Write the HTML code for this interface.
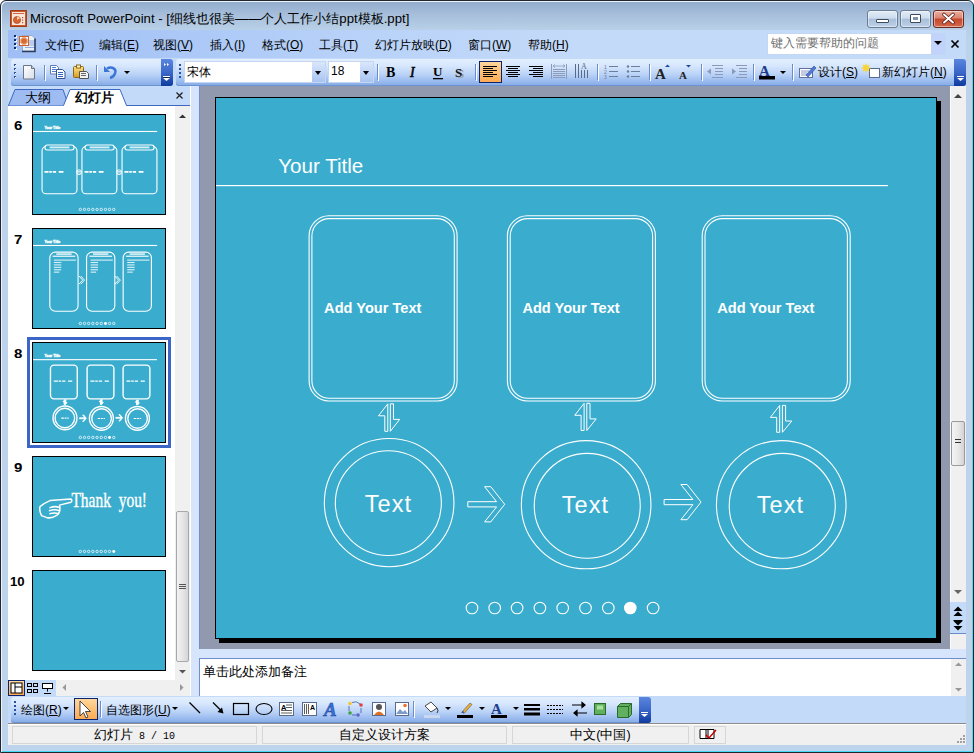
<!DOCTYPE html>
<html><head><meta charset="utf-8">
<style>
*{margin:0;padding:0;box-sizing:border-box}
html,body{width:974px;height:753px;overflow:hidden;background:#fff}
body{font-family:"Liberation Sans",sans-serif;font-size:12px;color:#000;position:relative}
.a{position:absolute}
#win{left:0;top:0;width:974px;height:753px;border:1px solid #1e2630;border-radius:6px 6px 0 0;background:linear-gradient(#94aecf 2px,#a7bfdb 14px,#b9d0e8 29px,#bcd3eb 40px,#bed4ec 100%);box-shadow:inset 1px 1px 0 #eef4fa,inset -1px -1px 0 #46d8f4}
#title{left:30px;top:10px;font-size:13.2px;color:#000;white-space:nowrap;letter-spacing:0}
.wbtn{top:10px;height:18px;border:1px solid #6b7d93;border-radius:3px;background:linear-gradient(#e2ecf6 0,#ccdcee 45%,#a8bfd9 50%,#bdd1e8 100%);box-shadow:inset 0 0 0 1px rgba(255,255,255,.45)}
#menubar{left:8px;top:30px;width:958px;height:28px;background:linear-gradient(90deg,#9ebef5 0,#b7d1f8 35%,#c4daf9 60%,#c4daf9 100%)}
.menu{top:37px;font-size:12px;white-space:nowrap}
.dock{background:#c4daf9}
.tb{height:27px;border-radius:3px;background:linear-gradient(#e3effe 0,#d7e7fd 25%,#bcd4f7 55%,#9dbdf0 80%,#84a9e4 100%);box-shadow:inset 0 -1px 0 #6a93d0}
.chev{width:12px;height:27px;border-radius:0 3px 3px 0;background:linear-gradient(#5a86de 0,#3b67c8 50%,#0f3a9e 100%)}
.grip{width:3px;height:15px;background:repeating-linear-gradient(#27519c 0 2px,transparent 2px 3px,transparent 3px 4px)}
.sep{width:1px;height:17px;background:#6a8ccb;box-shadow:1px 0 0 #fff}
.ttxt{font-size:12px;white-space:nowrap}
#ws{left:199px;top:86px;width:751px;height:563px;background:#9099ae;border-left:1px solid #6f8fca}
#slide{left:215px;top:97px;width:722px;height:542px;background:#3aadce;border:1px solid #000;box-shadow:4px 4px 0 #000}
.sb{background:#f0f0f0}
.stat{top:726px;height:18px;border:1px solid #d6d6d6;background:#f0f0f0;text-align:center;font-size:12.5px;line-height:16px;white-space:nowrap}
.num{font-weight:bold;font-size:12px}
.thumb{left:32px;width:134px;height:101px;border:1px solid #000;background:#3aadce;overflow:hidden}
</style></head><body>
<div id="win" class="a"></div>
<!-- title bar -->
<svg class="a" style="left:10px;top:10px" width="17" height="17" viewBox="0 0 17 17">
<rect x="0" y="0" width="17" height="17" fill="#c9582c"/>
<rect x="0.5" y="0.5" width="16" height="16" fill="none" stroke="#a23f18"/>
<rect x="2" y="2" width="13" height="13" fill="#f7e6dc"/>
<rect x="3" y="3" width="11" height="1" fill="#d0643a"/>
<circle cx="7" cy="10" r="3.6" fill="#d6652f" stroke="#a8421b" stroke-width=".6"/>
<path d="M7 10 V6.4 A3.6 3.6 0 0 1 10.2 8.2Z" fill="#f3c7a8"/>
<rect x="12" y="7" width="1.2" height="1.2" fill="#b24a22"/><rect x="12" y="9.5" width="1.2" height="1.2" fill="#b24a22"/><rect x="12" y="12" width="1.2" height="1.2" fill="#b24a22"/>
</svg>
<div id="title" class="a">Microsoft PowerPoint - [细线也很美——个人工作小结ppt模板.ppt]</div>
<div class="a wbtn" style="left:867px;width:31px"></div>
<div class="a" style="left:876px;top:19px;width:13px;height:4px;background:#fff;border:1px solid #3b4b5e;border-radius:1px"></div>
<div class="a wbtn" style="left:900px;width:31px"></div>
<div class="a" style="left:910px;top:14px;width:11px;height:9px;background:#fff;border:1px solid #3b4b5e;border-radius:1px"></div>
<div class="a" style="left:913px;top:17px;width:5px;height:3px;background:#7c93ad"></div>
<div class="a wbtn" style="left:933px;width:31px;border-color:#6a2a22;background:linear-gradient(#eab0a2 0,#dc8672 42%,#c7482c 52%,#d4694d 100%)"></div>
<svg class="a" style="left:933px;top:10px" width="31" height="18"><path d="M11 4.5 L20 12.5 M20 4.5 L11 12.5" stroke="#5a2018" stroke-width="3.6" stroke-linecap="round"/><path d="M11 4.5 L20 12.5 M20 4.5 L11 12.5" stroke="#fff" stroke-width="1.9" stroke-linecap="round"/></svg>

<div id="menubar" class="a"></div>
<svg class="a" style="left:0;top:28px" width="50" height="30" viewBox="0 28 50 30">
<g fill="#fff"><rect x="15" y="36" width="2" height="2"/><rect x="15" y="40" width="2" height="2"/><rect x="15" y="44" width="2" height="2"/><rect x="15" y="48" width="2" height="2"/></g>
<g fill="#0f2a66"><rect x="14" y="35" width="2" height="2"/><rect x="14" y="39" width="2" height="2"/><rect x="14" y="43" width="2" height="2"/><rect x="14" y="47" width="2" height="2"/></g>
<path d="M22.5 35.5h9.5l3 3v12.5h-12.5z" fill="#e8f0fc" stroke="#8aa0c0" stroke-width=".8"/>
<path d="M35 38.5v13h-13" fill="none" stroke="#2c3e5c" stroke-width="1.6"/>
<path d="M29 41h5M29 43h5M29 45h5M25 47.5h9" stroke="#7fa2dc" stroke-width=".9"/>
<rect x="19" y="36" width="10" height="10" fill="#d0602c"/>
<rect x="20" y="37" width="8" height="8" fill="#f2b48c"/>
<circle cx="24" cy="41" r="2.8" fill="#d56a34"/>
<g fill="#fff"><rect x="20" y="37" width="2" height="1"/><rect x="20" y="37" width="1" height="2"/><rect x="26" y="37" width="2" height="1"/><rect x="27" y="37" width="1" height="2"/><rect x="20" y="44" width="2" height="1"/><rect x="20" y="43" width="1" height="2"/><rect x="26" y="44" width="2" height="1"/><rect x="27" y="43" width="1" height="2"/></g>
</svg>
<div class="a menu" style="left:45px">文件(<u>F</u>)</div>
<div class="a menu" style="left:99px">编辑(<u>E</u>)</div>
<div class="a menu" style="left:153px">视图(<u>V</u>)</div>
<div class="a menu" style="left:210px">插入(<u>I</u>)</div>
<div class="a menu" style="left:262px">格式(<u>O</u>)</div>
<div class="a menu" style="left:319px">工具(<u>T</u>)</div>
<div class="a menu" style="left:375px">幻灯片放映(<u>D</u>)</div>
<div class="a menu" style="left:468px">窗口(<u>W</u>)</div>
<div class="a menu" style="left:528px">帮助(<u>H</u>)</div>
<!-- help box -->
<div class="a" style="left:767px;top:33px;width:179px;height:22px;background:#fff;border:1px solid #c3d6f3"></div>
<div class="a" style="left:931px;top:34px;width:14px;height:20px;background:#c1d3fb"></div>
<div class="a" style="left:934px;top:41px;width:0;height:0;border-left:4px solid transparent;border-right:4px solid transparent;border-top:4px solid #000"></div>
<div class="a" style="left:771px;top:35px;font-size:12px;color:#707070;white-space:nowrap">键入需要帮助的问题</div>
<svg class="a" style="left:950px;top:39px" width="10" height="10"><path d="M1.5 1.5L8.5 8.5M8.5 1.5L1.5 8.5" stroke="#000" stroke-width="1.7"/></svg>

<!-- toolbar dock -->
<div class="a dock" style="left:8px;top:58px;width:958px;height:28px"></div>
<div class="a tb" style="left:11px;top:59px;width:162px"></div>
<div class="a chev" style="left:161px;top:59px"></div>
<div class="a tb" style="left:176px;top:59px;width:790px"></div>
<div class="a chev" style="left:954px;top:59px"></div>


<!-- font boxes -->
<div class="a" style="left:184px;top:61px;width:142px;height:22px;background:#fff;border:1px solid #c5d6f2"></div>
<div class="a" style="left:312px;top:62px;width:13px;height:20px;background:linear-gradient(#d9e7fc,#a9c4f2)"></div>
<div class="a" style="left:315px;top:71px;width:0;height:0;border-left:3.5px solid transparent;border-right:3.5px solid transparent;border-top:4px solid #000"></div>
<div class="a ttxt" style="left:187px;top:64px">宋体</div>
<div class="a" style="left:328px;top:61px;width:46px;height:22px;background:#fff;border:1px solid #c5d6f2"></div>
<div class="a" style="left:360px;top:62px;width:13px;height:20px;background:linear-gradient(#d9e7fc,#a9c4f2)"></div>
<div class="a" style="left:363px;top:71px;width:0;height:0;border-left:3.5px solid transparent;border-right:3.5px solid transparent;border-top:4px solid #000"></div>
<div class="a ttxt" style="left:331px;top:64px">18</div>
<!-- align left pressed -->
<div class="a" style="left:479px;top:61px;width:23px;height:22px;background:linear-gradient(#ffd79b,#fdaa52);border:1px solid #0a2470"></div>
<div class="a ttxt" style="left:818px;top:64px">设计(<u>S</u>)</div>
<div class="a ttxt" style="left:882px;top:64px">新幻灯片(<u>N</u>)</div>

<!-- left pane -->
<div class="a" style="left:8px;top:86px;width:182px;height:20px;background:#c3daf9"></div>
<div class="a" style="left:8px;top:105px;width:182px;height:1px;background:#3d68c0"></div>
<div class="a" style="left:8px;top:106px;width:167px;height:574px;background:#fff"></div>
<div class="a sb" style="left:175px;top:106px;width:15px;height:574px"></div>
<div class="a" style="left:176px;top:511px;width:13px;height:151px;border:1px solid #a8a8a8;border-radius:2px;background:linear-gradient(90deg,#f2f2f2,#e6e6e6 50%,#d4d4d8)"></div>
<div class="a" style="left:179px;top:584px;width:7px;height:5px;background:repeating-linear-gradient(#555 0 1px,transparent 1px 2px)"></div>
<div class="a" style="left:8px;top:680px;width:48px;height:16px;background:#c3daf9"></div>
<div class="a sb" style="left:56px;top:680px;width:134px;height:16px"></div>
<div class="a" style="left:8px;top:680px;width:17px;height:16px;background:linear-gradient(#ffd99a,#fea94f);border:1px solid #0a2470"></div>
<!-- THUMBS -->
<div class="a num" style="left:14px;top:119px;transform:scaleX(1.25);transform-origin:0 0">6</div>
<div class="a thumb" style="top:114px"><svg width="133" height="100" viewBox="0 0 720 540" preserveAspectRatio="none"><text x="62" y="75" font-size="19" font-weight="bold" fill="#fff" stroke="#fff" stroke-width="2" font-family="Liberation Sans">Your Title</text><rect x="0" y="86" width="672" height="6" fill="#fff"/><rect x="49" y="171" width="189" height="254" rx="22" fill="none" stroke="#fff" stroke-width="6"/><rect x="65" y="162" width="157" height="27" rx="12" fill="#3aadce" stroke="#fff" stroke-width="6"/><rect x="90" y="170" width="107" height="10" fill="#fff" opacity=".8"/><path d="M62 307h115" stroke="#fff" stroke-width="9" stroke-dasharray="22 4 14 5 18 14 26 12"/><rect x="265" y="171" width="189" height="254" rx="22" fill="none" stroke="#fff" stroke-width="6"/><rect x="282" y="162" width="157" height="27" rx="12" fill="#3aadce" stroke="#fff" stroke-width="6"/><rect x="307" y="170" width="107" height="10" fill="#fff" opacity=".8"/><path d="M279 307h115" stroke="#fff" stroke-width="9" stroke-dasharray="22 4 14 5 18 14 26 12"/><rect x="482" y="171" width="189" height="254" rx="22" fill="none" stroke="#fff" stroke-width="6"/><rect x="498" y="162" width="157" height="27" rx="12" fill="#3aadce" stroke="#fff" stroke-width="6"/><rect x="523" y="170" width="107" height="10" fill="#fff" opacity=".8"/><path d="M495 307h115" stroke="#fff" stroke-width="9" stroke-dasharray="22 4 14 5 18 14 26 12"/><circle cx="249" cy="309" r="13" fill="none" stroke="#fff" stroke-width="5"/><path d="M239 305h20M239 313h20" stroke="#fff" stroke-width="4"/><circle cx="466" cy="309" r="13" fill="none" stroke="#fff" stroke-width="5"/><path d="M456 305h20M456 313h20" stroke="#fff" stroke-width="4"/><circle cx="256.0" cy="510" r="6.5" fill="none" stroke="#fff" stroke-width="4"/><circle cx="278.7" cy="510" r="6.5" fill="none" stroke="#fff" stroke-width="4"/><circle cx="301.1" cy="510" r="6.5" fill="none" stroke="#fff" stroke-width="4"/><circle cx="323.9" cy="510" r="6.5" fill="none" stroke="#fff" stroke-width="4"/><circle cx="346.7" cy="510" r="6.5" fill="none" stroke="#fff" stroke-width="4"/><circle cx="369.5" cy="510" r="6.5" fill="none" stroke="#fff" stroke-width="4"/><circle cx="392.3" cy="510" r="6.5" fill="none" stroke="#fff" stroke-width="4"/><circle cx="414.3" cy="510" r="6.5" fill="none" stroke="#fff" stroke-width="4"/><circle cx="437.1" cy="510" r="6.5" fill="none" stroke="#fff" stroke-width="4"/></svg></div>
<div class="a num" style="left:14px;top:233px;transform:scaleX(1.25);transform-origin:0 0">7</div>
<div class="a thumb" style="top:228px"><svg width="133" height="100" viewBox="0 0 720 540" preserveAspectRatio="none"><text x="62" y="75" font-size="19" font-weight="bold" fill="#fff" stroke="#fff" stroke-width="2" font-family="Liberation Sans">Your Title</text><rect x="0" y="86" width="672" height="6" fill="#fff"/><rect x="91" y="125" width="153" height="319" rx="30" fill="none" stroke="#fff" stroke-width="6"/><path d="M106 147h123" stroke="#fff" stroke-width="6"/><rect x="126" y="131" width="83" height="9" fill="#fff" opacity=".8"/><rect x="113" y="165" width="120" height="6" fill="#fff" opacity=".8"/><rect x="113" y="178" width="40" height="6" fill="#fff" opacity=".8"/><rect x="113" y="191" width="40" height="6" fill="#fff" opacity=".8"/><rect x="113" y="204" width="40" height="6" fill="#fff" opacity=".8"/><rect x="113" y="217" width="40" height="6" fill="#fff" opacity=".8"/><rect x="113" y="230" width="30" height="6" fill="#fff" opacity=".8"/><rect x="290" y="125" width="153" height="319" rx="30" fill="none" stroke="#fff" stroke-width="6"/><path d="M305 147h123" stroke="#fff" stroke-width="6"/><rect x="325" y="131" width="83" height="9" fill="#fff" opacity=".8"/><rect x="312" y="165" width="120" height="6" fill="#fff" opacity=".8"/><rect x="312" y="178" width="40" height="6" fill="#fff" opacity=".8"/><rect x="312" y="191" width="40" height="6" fill="#fff" opacity=".8"/><rect x="312" y="204" width="40" height="6" fill="#fff" opacity=".8"/><rect x="312" y="217" width="40" height="6" fill="#fff" opacity=".8"/><rect x="312" y="230" width="30" height="6" fill="#fff" opacity=".8"/><rect x="488" y="125" width="153" height="319" rx="30" fill="none" stroke="#fff" stroke-width="6"/><path d="M503 147h123" stroke="#fff" stroke-width="6"/><rect x="523" y="131" width="83" height="9" fill="#fff" opacity=".8"/><rect x="510" y="165" width="120" height="6" fill="#fff" opacity=".8"/><rect x="510" y="178" width="40" height="6" fill="#fff" opacity=".8"/><rect x="510" y="191" width="40" height="6" fill="#fff" opacity=".8"/><rect x="510" y="204" width="40" height="6" fill="#fff" opacity=".8"/><rect x="510" y="217" width="40" height="6" fill="#fff" opacity=".8"/><rect x="510" y="230" width="30" height="6" fill="#fff" opacity=".8"/><path d="M249 254 L269 276.09022556390977 L249 298 M259 254 L279 276.09022556390977 L259 298" fill="none" stroke="#fff" stroke-width="5"/><path d="M443 254 L463 276.09022556390977 L443 298 M453 254 L473 276.09022556390977 L453 298" fill="none" stroke="#fff" stroke-width="5"/><circle cx="256.0" cy="510" r="6.5" fill="none" stroke="#fff" stroke-width="4"/><circle cx="278.7" cy="510" r="6.5" fill="none" stroke="#fff" stroke-width="4"/><circle cx="301.1" cy="510" r="6.5" fill="none" stroke="#fff" stroke-width="4"/><circle cx="323.9" cy="510" r="6.5" fill="none" stroke="#fff" stroke-width="4"/><circle cx="346.7" cy="510" r="6.5" fill="none" stroke="#fff" stroke-width="4"/><circle cx="369.5" cy="510" r="6.5" fill="none" stroke="#fff" stroke-width="4"/><circle cx="392.3" cy="510" r="8" fill="#fff"/><circle cx="414.3" cy="510" r="6.5" fill="none" stroke="#fff" stroke-width="4"/><circle cx="437.1" cy="510" r="6.5" fill="none" stroke="#fff" stroke-width="4"/></svg></div>
<div class="a" style="left:27px;top:337px;width:144px;height:111px;border:3px solid #3b66c8"></div>
<div class="a num" style="left:14px;top:347px;transform:scaleX(1.25);transform-origin:0 0">8</div>
<div class="a thumb" style="top:342px"><svg width="133" height="100" viewBox="0 0 720 540" preserveAspectRatio="none"><text x="62.2" y="75.2" font-size="19" font-weight="bold" fill="#fff" stroke="#fff" stroke-width="2" font-family="Liberation Sans">Your Title</text>
<rect x="0" y="87" width="671" height="6" fill="#fff"/>
<rect x="94.6" y="119.3" width="145.0" height="182.2" rx="19" fill="none" stroke="#fff" stroke-width="7.5"/>
<path d="M112.6 206.0h100" stroke="#fff" stroke-width="6" stroke-dasharray="22 4 14 5 18 14 26 12"/>
<rect x="292.9" y="119.3" width="145.0" height="182.2" rx="19" fill="none" stroke="#fff" stroke-width="7.5"/>
<path d="M310.9 206.0h100" stroke="#fff" stroke-width="6" stroke-dasharray="22 4 14 5 18 14 26 12"/>
<rect x="487.7" y="119.3" width="145.0" height="182.2" rx="19" fill="none" stroke="#fff" stroke-width="7.5"/>
<path d="M505.7 206.0h100" stroke="#fff" stroke-width="6" stroke-dasharray="22 4 14 5 18 14 26 12"/>
<ellipse cx="173.15" cy="404.60" rx="64.8" ry="64.1" fill="none" stroke="#fff" stroke-width="7.5"/>
<ellipse cx="172.35" cy="405.10" rx="53" ry="52.4" fill="none" stroke="#fff" stroke-width="7.5"/>
<path d="M153.1 405.6h40" stroke="#fff" stroke-width="6" stroke-dasharray="14 4 10 4 12 8"/>
<path d="M168.8 333.3 V317.8 H162.5 L171.8 305.8 V333.3 Z" fill="#fff" stroke="#fff" stroke-width="5"/><path d="M174.3 305.8 H177.5 V321.4 H183.7 L174.3 333.3 Z" fill="#fff" stroke="#fff" stroke-width="5"/>
<ellipse cx="370.15" cy="406.70" rx="64.8" ry="64.1" fill="none" stroke="#fff" stroke-width="7.5"/>
<ellipse cx="371.25" cy="407.80" rx="53" ry="52.4" fill="none" stroke="#fff" stroke-width="7.5"/>
<path d="M350.1 407.7h40" stroke="#fff" stroke-width="6" stroke-dasharray="14 4 10 4 12 8"/>
<path d="M365.1 332.5 V317.3 H358.8 L368.1 305.3 V332.5 Z" fill="#fff" stroke="#fff" stroke-width="5"/><path d="M370.8 305.3 H374.0 V320.9 H380.2 L370.8 332.5 Z" fill="#fff" stroke="#fff" stroke-width="5"/>
<ellipse cx="565.25" cy="406.70" rx="64.8" ry="64.1" fill="none" stroke="#fff" stroke-width="7.5"/>
<ellipse cx="566.25" cy="407.80" rx="53" ry="52.4" fill="none" stroke="#fff" stroke-width="7.5"/>
<path d="M545.2 407.7h40" stroke="#fff" stroke-width="6" stroke-dasharray="14 4 10 4 12 8"/>
<path d="M560.7 334.3 V319.4 H554.4 L563.7 307.4 V334.3 Z" fill="#fff" stroke="#fff" stroke-width="5"/><path d="M566.4 307.4 H569.6 V323.0 H575.8 L566.4 334.3 Z" fill="#fff" stroke="#fff" stroke-width="5"/>
<path d="M251.80 403.70 H280.60 L268.60 388.70 H274.80 L288.70 406.30 L274.80 423.90 H268.60 L280.60 408.90 H251.80 Z" fill="#fff" stroke="#fff" stroke-width="4"/>
<path d="M448.10 401.50 H476.90 L464.90 386.50 H471.10 L485.00 404.10 L471.10 421.70 H464.90 L476.90 406.70 H448.10 Z" fill="#fff" stroke="#fff" stroke-width="4"/>
<circle cx="256.0" cy="510" r="6.5" fill="none" stroke="#fff" stroke-width="4"/><circle cx="278.7" cy="510" r="6.5" fill="none" stroke="#fff" stroke-width="4"/><circle cx="301.1" cy="510" r="6.5" fill="none" stroke="#fff" stroke-width="4"/><circle cx="323.9" cy="510" r="6.5" fill="none" stroke="#fff" stroke-width="4"/><circle cx="346.7" cy="510" r="6.5" fill="none" stroke="#fff" stroke-width="4"/><circle cx="369.5" cy="510" r="6.5" fill="none" stroke="#fff" stroke-width="4"/><circle cx="392.3" cy="510" r="6.5" fill="none" stroke="#fff" stroke-width="4"/><circle cx="414.3" cy="510" r="8" fill="#fff"/><circle cx="437.1" cy="510" r="6.5" fill="none" stroke="#fff" stroke-width="4"/></svg></div>
<div class="a num" style="left:14px;top:461px;transform:scaleX(1.25);transform-origin:0 0">9</div>
<div class="a thumb" style="top:456px"><svg width="133" height="100" viewBox="0 0 720 540" preserveAspectRatio="none"><text x="0" y="0" font-size="118" fill="#fff" font-family="Liberation Serif" stroke="#fff" stroke-width="2" transform="translate(208 268) scale(0.71 1)">Thank&#160;&#160;you!</text><g transform="scale(5.4135) translate(-33 -457)" fill="none" stroke="#fff" stroke-width="1.5" stroke-linejoin="round" stroke-linecap="round"><path d="M50 500.5 L71 499 Q72.6 500.6 71 502.2 L59.5 505 Q61 512 57 515 Q52 518.5 47 517.5 L41.5 515.5 Q39 510.5 40 506.5 Q45 502.5 50 500.5 Z"/><path d="M50 507.5 Q55 505.5 59.5 507.5 M49.5 510.5 Q54.5 508.8 59.5 510.5 M50 513.5 Q54.5 512 58.5 513.5"/></g><circle cx="256.0" cy="510" r="6.5" fill="none" stroke="#fff" stroke-width="4"/><circle cx="278.7" cy="510" r="6.5" fill="none" stroke="#fff" stroke-width="4"/><circle cx="301.1" cy="510" r="6.5" fill="none" stroke="#fff" stroke-width="4"/><circle cx="323.9" cy="510" r="6.5" fill="none" stroke="#fff" stroke-width="4"/><circle cx="346.7" cy="510" r="6.5" fill="none" stroke="#fff" stroke-width="4"/><circle cx="369.5" cy="510" r="6.5" fill="none" stroke="#fff" stroke-width="4"/><circle cx="392.3" cy="510" r="6.5" fill="none" stroke="#fff" stroke-width="4"/><circle cx="414.3" cy="510" r="6.5" fill="none" stroke="#fff" stroke-width="4"/><circle cx="437.1" cy="510" r="8" fill="#fff"/></svg></div>
<div class="a num" style="left:10px;top:575px;transform:scaleX(1.1);transform-origin:0 0">10</div>
<div class="a thumb" style="top:570px"></div>
<!-- /THUMBS -->
<!-- splitter -->
<div class="a" style="left:190px;top:86px;width:9px;height:610px;background:#d6e5fb;border-left:1px solid #fff"></div>

<div id="ws" class="a"></div>
<div id="slide" class="a"></div>
<!-- SLIDE8 --><svg class="a" style="left:216px;top:98px" width="720" height="540" viewBox="0 0 720 540"><text x="62.2" y="75.2" font-size="20.6" fill="#fff" font-family="Liberation Sans">Your Title</text>
<rect x="0" y="87" width="672" height="1.2" fill="#fff"/>
<rect x="93.1" y="117.8" width="148.0" height="185.2" rx="20" fill="none" stroke="#fff" stroke-width="1.1"/>
<rect x="95.9" y="120.6" width="142.4" height="179.6" rx="17.5" fill="none" stroke="#fff" stroke-width="1.1"/>
<text x="108.1" y="215.2" font-size="14.6" font-weight="bold" fill="#fff" font-family="Liberation Sans">Add Your Text</text>
<rect x="291.4" y="117.8" width="148.0" height="185.2" rx="20" fill="none" stroke="#fff" stroke-width="1.1"/>
<rect x="294.2" y="120.6" width="142.4" height="179.6" rx="17.5" fill="none" stroke="#fff" stroke-width="1.1"/>
<text x="306.4" y="215.2" font-size="14.6" font-weight="bold" fill="#fff" font-family="Liberation Sans">Add Your Text</text>
<rect x="486.2" y="117.8" width="148.0" height="185.2" rx="20" fill="none" stroke="#fff" stroke-width="1.1"/>
<rect x="489.0" y="120.6" width="142.4" height="179.6" rx="17.5" fill="none" stroke="#fff" stroke-width="1.1"/>
<text x="501.2" y="215.2" font-size="14.6" font-weight="bold" fill="#fff" font-family="Liberation Sans">Add Your Text</text>
<ellipse cx="173.15" cy="404.60" rx="64.8" ry="64.1" fill="none" stroke="#fff" stroke-width="1.1"/>
<ellipse cx="172.35" cy="405.10" rx="53" ry="52.4" fill="none" stroke="#fff" stroke-width="1.1"/>
<text x="172.4" y="413.8" font-size="23.5" letter-spacing="1.1" fill="#fff" text-anchor="middle" font-family="Liberation Sans">Text</text>
<path d="M168.8 333.3 V317.8 H162.5 L171.8 305.8 V333.3 Z" fill="none" stroke="#fff" stroke-width="1"/>
<path d="M174.3 305.8 H177.5 V321.4 H183.7 L174.3 333.3 Z" fill="none" stroke="#fff" stroke-width="1"/>
<ellipse cx="370.15" cy="406.70" rx="64.8" ry="64.1" fill="none" stroke="#fff" stroke-width="1.1"/>
<ellipse cx="371.25" cy="407.80" rx="53" ry="52.4" fill="none" stroke="#fff" stroke-width="1.1"/>
<text x="369.4" y="415.3" font-size="23.5" letter-spacing="1.1" fill="#fff" text-anchor="middle" font-family="Liberation Sans">Text</text>
<path d="M365.1 332.5 V317.3 H358.8 L368.1 305.3 V332.5 Z" fill="none" stroke="#fff" stroke-width="1"/>
<path d="M370.8 305.3 H374.0 V320.9 H380.2 L370.8 332.5 Z" fill="none" stroke="#fff" stroke-width="1"/>
<ellipse cx="565.25" cy="406.70" rx="64.8" ry="64.1" fill="none" stroke="#fff" stroke-width="1.1"/>
<ellipse cx="566.25" cy="407.80" rx="53" ry="52.4" fill="none" stroke="#fff" stroke-width="1.1"/>
<text x="564.5" y="415.3" font-size="23.5" letter-spacing="1.1" fill="#fff" text-anchor="middle" font-family="Liberation Sans">Text</text>
<path d="M560.7 334.3 V319.4 H554.4 L563.7 307.4 V334.3 Z" fill="none" stroke="#fff" stroke-width="1"/>
<path d="M566.4 307.4 H569.6 V323.0 H575.8 L566.4 334.3 Z" fill="none" stroke="#fff" stroke-width="1"/>
<path d="M251.80 403.70 H280.60 L268.60 388.70 H274.80 L288.70 406.30 L274.80 423.90 H268.60 L280.60 408.90 H251.80 Z" fill="none" stroke="#fff" stroke-width="1"/>
<path d="M448.10 401.50 H476.90 L464.90 386.50 H471.10 L485.00 404.10 L471.10 421.70 H464.90 L476.90 406.70 H448.10 Z" fill="none" stroke="#fff" stroke-width="1"/>
<circle cx="256.0" cy="510" r="5.8" fill="none" stroke="#fff" stroke-width="1.1"/><circle cx="278.7" cy="510" r="5.8" fill="none" stroke="#fff" stroke-width="1.1"/><circle cx="301.1" cy="510" r="5.8" fill="none" stroke="#fff" stroke-width="1.1"/><circle cx="323.9" cy="510" r="5.8" fill="none" stroke="#fff" stroke-width="1.1"/><circle cx="346.7" cy="510" r="5.8" fill="none" stroke="#fff" stroke-width="1.1"/><circle cx="369.5" cy="510" r="5.8" fill="none" stroke="#fff" stroke-width="1.1"/><circle cx="392.3" cy="510" r="5.8" fill="none" stroke="#fff" stroke-width="1.1"/><circle cx="414.3" cy="510" r="6.3" fill="#fff"/><circle cx="437.1" cy="510" r="5.8" fill="none" stroke="#fff" stroke-width="1.1"/></svg><!-- /SLIDE8 -->
<!-- right scrollbar -->
<div class="a sb" style="left:950px;top:86px;width:16px;height:563px;border-left:1px solid #fbfbfb"></div>
<div class="a" style="left:951px;top:421px;width:14px;height:45px;border:1px solid #9a9a9a;border-radius:2px;background:linear-gradient(90deg,#f4f4f4,#e9e9e9 50%,#d3d3d7)"></div>
<div class="a" style="left:955px;top:439px;width:6px;height:6px;background:repeating-linear-gradient(#333 0 1px,transparent 1px 3px)"></div>
<div class="a" style="left:950px;top:602px;width:16px;height:32px;background:#c3daf9;border-bottom:1px solid #6a8ccb"></div>
<!-- notes splitter + notes -->
<div class="a" style="left:199px;top:649px;width:767px;height:10px;background:#d6e5fb;border-bottom:1px solid #6f8fca"></div>
<div class="a" style="left:199px;top:659px;width:767px;height:37px;background:#fff;border-left:1px solid #6f8fca"></div>
<div class="a sb" style="left:951px;top:659px;width:15px;height:37px"></div>
<div class="a" style="left:203px;top:664px;font-size:12.7px;white-space:nowrap">单击此处添加备注</div>
<!-- drawing toolbar -->
<div class="a dock" style="left:8px;top:696px;width:958px;height:28px"></div>
<div class="a tb" style="left:11px;top:697px;width:640px;height:26px"></div>
<div class="a chev" style="left:639px;top:697px;height:26px"></div>
<div class="a" style="left:74px;top:698px;width:24px;height:22px;background:linear-gradient(#ffd79b,#fdaa52);border:1px solid #0a2470"></div>
<div class="a ttxt" style="left:21px;top:702px">绘图(<u>R</u>)</div>
<div class="a ttxt" style="left:106px;top:702px">自选图形(<u>U</u>)</div>
<!-- status bar -->
<div class="a" style="left:8px;top:723px;width:958px;height:22px;background:#f0f0f0;border-top:1px solid #8c8c8c;box-shadow:inset 0 1px 0 #fff"></div>
<div class="a stat" style="left:12px;width:245px">幻灯片<span style="font-family:'Liberation Mono',monospace;font-size:10px;white-space:pre"> 8 / 10</span></div>
<div class="a stat" style="left:262px;width:245px">自定义设计方案</div>
<div class="a stat" style="left:512px;width:177px">中文(中国)</div>
<div class="a stat" style="left:694px;width:32px"></div>
<!-- CHROME2 -->
<svg class="a" style="left:0;top:0" width="974" height="753" viewBox="0 0 974 753">
<defs>
<linearGradient id="gor" x1="0" y1="0" x2="0" y2="1"><stop offset="0" stop-color="#ffd99c"/><stop offset="1" stop-color="#fda54c"/></linearGradient>
</defs>
<!-- pane tabs -->
<path d="M8.5 105.5 L15 89.5 H63 L68.5 105.5" fill="#9ebcf2" stroke="#3d68c0"/>
<path d="M63.5 105.5 L70 89.5 H120 L126.5 105.5" fill="#fff" stroke="#3d68c0"/>
<rect x="64" y="105" width="62" height="1.2" fill="#fff"/>
<text x="25" y="102" font-size="12.5" font-family="Liberation Sans">大纲</text>
<text x="75" y="102" font-size="12.5" font-weight="bold" font-family="Liberation Sans">幻灯片</text>
<path d="M176.5 92.5 L182.5 98.5 M182.5 92.5 L176.5 98.5" stroke="#222" stroke-width="1.3"/>
<!-- left pane scrollbar arrows -->
<path d="M179 118 h7 l-3.5 -3.5z" fill="#333"/>
<path d="M179 670 h7 l-3.5 3.5z" fill="#555"/>
<path d="M66 684 v7 l-3.5 -3.5z" fill="#999"/>
<path d="M180 684 v7 l3.5 -3.5z" fill="#999"/>
<!-- view buttons -->
<rect x="11" y="683" width="11" height="10" fill="#fff" stroke="#000"/><path d="M15 683v10M15 687h7" stroke="#000"/>
<g fill="none" stroke="#000"><rect x="27.5" y="683.5" width="4" height="3"/><rect x="33.5" y="683.5" width="4" height="3"/><rect x="27.5" y="689.5" width="4" height="3"/><rect x="33.5" y="689.5" width="4" height="3"/>
<rect x="42.5" y="683.5" width="10" height="5" fill="#fff"/><path d="M47.5 688.5v3M44 693.5h7"/></g>
<!-- right scrollbar arrows -->
<path d="M954 98 h8 l-4 -4z" fill="#444"/>
<path d="M954 590 h8 l-4 4z" fill="#666"/>
<g fill="#000"><path d="M953.5 611 h9 l-4.5 -4.5z"/><path d="M953.5 616 h9 l-4.5 -4.5z"/><rect x="953.5" y="620" width="9" height="1"/><path d="M953.5 621 h9 l-4.5 4.5z"/><path d="M953.5 626 h9 l-4.5 4.5z"/></g>
<path d="M955 666 h7 l-3.5 -3.5z" fill="#999"/>
<path d="M955 688 h7 l-3.5 3.5z" fill="#999"/>
<!-- resize grip -->
<g fill="#a0a0a0"><rect x="963" y="741" width="2" height="2"/><rect x="960" y="741" width="2" height="2"/><rect x="957" y="741" width="2" height="2"/><rect x="963" y="738" width="2" height="2"/><rect x="960" y="738" width="2" height="2"/><rect x="963" y="735" width="2" height="2"/></g>
<!-- spell icon in status -->
<path d="M700 729.5h8v9h-8zM706 729.5h8v9h-8z" fill="#fff" stroke="#000"/>
<path d="M706 735 l3 3 l7 -8" stroke="#c00" stroke-width="1.5" fill="none"/>
</svg>
<!-- /CHROME2 -->
<!-- TB2 -->
<svg class="a" style="left:0;top:0" width="974" height="100" viewBox="0 0 974 100">
<g fill="#6a8ccb"><rect x="377" y="64" width="1" height="16"/><rect x="475" y="64" width="1" height="16"/><rect x="597" y="64" width="1" height="16"/><rect x="649" y="64" width="1" height="16"/><rect x="701" y="64" width="1" height="16"/><rect x="753" y="64" width="1" height="16"/><rect x="792" y="64" width="1" height="16"/></g>
<g fill="#fff"><rect x="378" y="65" width="1" height="16"/><rect x="476" y="65" width="1" height="16"/><rect x="598" y="65" width="1" height="16"/><rect x="650" y="65" width="1" height="16"/><rect x="702" y="65" width="1" height="16"/><rect x="754" y="65" width="1" height="16"/><rect x="793" y="65" width="1" height="16"/></g>
<!-- B I U S -->
<text x="386" y="77" font-size="14" font-weight="bold" font-family="Liberation Serif">B</text>
<text x="410" y="77" font-size="14" font-style="italic" font-family="Liberation Serif" stroke="#000" stroke-width=".5">I</text>
<text x="433" y="76" font-size="13" font-weight="bold" font-family="Liberation Serif">U</text><rect x="433" y="78" width="10" height="1.3" fill="#000"/>
<text x="457" y="78" font-size="13" font-weight="bold" font-family="Liberation Serif" fill="#999">S</text><text x="455" y="77" font-size="13" font-weight="bold" font-family="Liberation Serif" fill="#111">S</text>
<!-- align -->
<g fill="#000">
<rect x="483" y="66" width="14" height="1"/><rect x="483" y="68" width="10" height="1"/><rect x="483" y="70" width="14" height="1"/><rect x="483" y="72" width="10" height="1"/><rect x="483" y="74" width="14" height="1"/><rect x="483" y="76" width="10" height="1"/>
<rect x="506" y="66" width="14" height="1"/><rect x="508" y="68" width="10" height="1"/><rect x="506" y="70" width="14" height="1"/><rect x="508" y="72" width="10" height="1"/><rect x="506" y="74" width="14" height="1"/><rect x="508" y="76" width="10" height="1"/>
<rect x="529" y="66" width="14" height="1"/><rect x="533" y="68" width="10" height="1"/><rect x="529" y="70" width="14" height="1"/><rect x="533" y="72" width="10" height="1"/><rect x="529" y="74" width="14" height="1"/><rect x="533" y="76" width="10" height="1"/>
</g>
<g fill="#8c9cb8"><rect x="551" y="64" width="1" height="15"/><rect x="566" y="64" width="1" height="15"/><rect x="553" y="69" width="12" height="1"/><rect x="553" y="71" width="12" height="1"/><rect x="553" y="73" width="12" height="1"/><rect x="553" y="75" width="12" height="1"/><rect x="553" y="77" width="12" height="1"/><path d="M553 66h12M553 66l2 -1.5M553 66l2 1.5M565 66l-2 -1.5M565 66l-2 1.5" stroke="#8c9cb8" stroke-width=".8"/></g>
<g stroke="#5a6a8a" stroke-width="1"><path d="M575.5 64v14M578.5 64v14M581.5 70v8M584.5 70v8M587.5 70v8"/></g>
<text x="581" y="69" font-size="8" fill="#5a6a8a" font-family="Liberation Serif">A</text>
<!-- lists -->
<g fill="#6d7e9c"><text x="604" y="69" font-size="5" font-family="Liberation Sans">1</text><text x="604" y="74" font-size="5" font-family="Liberation Sans">2</text><text x="604" y="79" font-size="5" font-family="Liberation Sans">3</text>
<rect x="609" y="66" width="9" height="1"/><rect x="609" y="71" width="9" height="1"/><rect x="609" y="76" width="9" height="1"/>
<circle cx="628" cy="66.5" r="1.2"/><circle cx="628" cy="71.5" r="1.2"/><circle cx="628" cy="76.5" r="1.2"/><rect x="631" y="66" width="9" height="1"/><rect x="631" y="71" width="9" height="1"/><rect x="631" y="76" width="9" height="1"/></g>
<!-- A+ A- -->
<text x="655" y="79" font-size="15" font-weight="bold" font-family="Liberation Serif" fill="#222">A</text><path d="M665 67h5l-2.5 -2.5z" fill="#1c4aa8"/>
<text x="679" y="79" font-size="11" font-weight="bold" font-family="Liberation Serif" fill="#222">A</text><path d="M686 65h5l-2.5 2.5z" fill="#1c4aa8"/>
<!-- indents -->
<g fill="#8a9ab8"><rect x="712" y="65" width="11" height="1"/><rect x="715" y="68" width="8" height="1"/><rect x="715" y="71" width="8" height="1"/><rect x="715" y="74" width="8" height="1"/><rect x="712" y="77" width="11" height="1"/><path d="M707 71.5l4 -3v6z"/>
<rect x="736" y="65" width="11" height="1"/><rect x="739" y="68" width="8" height="1"/><rect x="739" y="71" width="8" height="1"/><rect x="739" y="74" width="8" height="1"/><rect x="736" y="77" width="11" height="1"/><path d="M736 71.5l-4 -3v6z"/></g>
<!-- font color -->
<text x="759" y="76" font-size="15" font-weight="bold" font-family="Liberation Serif" fill="#1c3c8c">A</text>
<rect x="759" y="76" width="16" height="3.5" fill="#000"/>
<path d="M780 71h6l-3 3z" fill="#000"/>
<!-- design icon -->
<rect x="799.5" y="68.5" width="13" height="9" fill="#fff" stroke="#6071a0"/><path d="M801 71h8M801 73h6M801 75h8" stroke="#8798c8"/>
<path d="M806 75 L814 66 L816 68 L808 77z" fill="#4e7ad8" stroke="#2a4a90" stroke-width=".6"/>
<!-- new slide icon -->
<rect x="869.5" y="68.5" width="10" height="9" fill="#fff" stroke="#5a6a8a"/>
<path d="M866 63l1 2.5l2.5-1l-1 2.5l2.5 1l-2.5 1l1 2.5l-2.5-1l-1 2.5l-1-2.5l-2.5 1l1-2.5l-2.5-1l2.5-1l-1-2.5l2.5 1z" fill="#f7d43a"/>
</svg>
<!-- /TB2 -->
<!-- DRAW -->
<svg class="a" style="left:0;top:690px" width="974" height="40" viewBox="0 690 974 40">
<g fill="#27519c"><rect x="14" y="701" width="2" height="2"/><rect x="14" y="705" width="2" height="2"/><rect x="14" y="709" width="2" height="2"/><rect x="14" y="713" width="2" height="2"/></g>
<path d="M63 707h6l-3 3z" fill="#000"/>
<path d="M172 707h6l-3 3z" fill="#000"/>
<path d="M80 701 v15 l3.5 -3.5 l2.5 5.5 l2 -1 l-2.5 -5.5 h5 z" fill="#fff" stroke="#333" stroke-width=".9"/>
<g fill="#6a8ccb"><rect x="100" y="701" width="1" height="16"/><rect x="413" y="701" width="1" height="16"/></g>
<g fill="#fff"><rect x="101" y="702" width="1" height="16"/><rect x="414" y="702" width="1" height="16"/></g>
<path d="M189.5 702.5 L200 713" stroke="#000" stroke-width="1.2"/>
<path d="M213 702.5 L221 710.5" stroke="#000" stroke-width="1.2"/><path d="M223.5 713.5 l-6 -1.5 l4.5 -4.5z" fill="#000"/>
<rect x="233.5" y="703.5" width="15" height="11" fill="none" stroke="#000" stroke-width="1.2"/>
<ellipse cx="264" cy="709" rx="8" ry="5.5" fill="none" stroke="#000" stroke-width="1.1"/>
<rect x="279.5" y="702.5" width="14" height="13" fill="#fff" stroke="#5a6a8a"/><text x="281" y="710" font-size="7.5" font-weight="bold" font-family="Liberation Sans">A</text><path d="M286 705h6M286 707.5h6M281 710.5h11M281 713h11" stroke="#333" stroke-width=".8"/>
<rect x="302.5" y="702.5" width="14" height="13" fill="#fff" stroke="#5a6a8a"/><path d="M304.5 704v10M306.5 704v10M308.5 704v10" stroke="#333" stroke-width=".8"/><text x="310" y="710" font-size="7" font-weight="bold" font-family="Liberation Sans">A</text>
<text x="324" y="716" font-size="19" font-weight="bold" font-style="italic" font-family="Liberation Serif" fill="#3a72d8" stroke="#1b3f9a" stroke-width=".5">A</text>
<g><circle cx="350" cy="703.5" r="1.8" fill="#f4c430"/><circle cx="361" cy="705" r="1.8" fill="#e04040"/><circle cx="350" cy="713" r="1.8" fill="#40a040"/><circle cx="358" cy="715" r="1.8" fill="#6060d0"/><path d="M352 702.5 A7 7 0 0 1 360 704M349 706 v5M352 715 h4M361 708 v5" stroke="#3a5aa0" stroke-width=".8" fill="none"/></g>
<rect x="372.5" y="702.5" width="13" height="13" fill="#fff" stroke="#5a6a8a"/><circle cx="379" cy="707" r="3" fill="#555"/><path d="M374 715 q5 -7 10 0z" fill="#e07020"/>
<rect x="395.5" y="702.5" width="13" height="13" fill="#fff" stroke="#5a6a8a"/><path d="M396 714 l4 -5 l3 3 l2 -2 l3 4z" fill="#7a9acb"/><circle cx="405" cy="705.5" r="1.8" fill="#f07030"/>
<path d="M425 706 l6 -4 l6 6 l-6 4z" fill="#fff" stroke="#333" stroke-width=".9"/><path d="M437 708 q2 3 0 5" stroke="#333" fill="none"/><rect x="424" y="715" width="16" height="3" fill="#c8d8f0"/>
<path d="M445 707h6l-3 3z" fill="#000"/>
<path d="M462 712 l8 -9 l2 1.5 l-8 9z" fill="#f0b030" stroke="#555" stroke-width=".6"/><path d="M461 713 l2 -2 l1.5 1.5z" fill="#2244aa"/><rect x="457" y="715" width="16" height="3" fill="#000"/>
<path d="M479 707h6l-3 3z" fill="#000"/>
<text x="491" y="714" font-size="15" font-weight="bold" font-family="Liberation Serif" fill="#1c3c8c">A</text><rect x="491" y="715" width="16" height="3" fill="#000"/>
<path d="M513 707h6l-3 3z" fill="#000"/>
<rect x="524" y="704" width="16" height="2" fill="#000"/><rect x="524" y="708" width="16" height="2.5" fill="#000"/><rect x="524" y="712.5" width="16" height="3" fill="#000"/>
<path d="M547 705.5h16M547 709.5h16M547 713.5h16" stroke="#000" stroke-width="1" stroke-dasharray="2 1"/>
<path d="M572 705h13M585 705l-3 -2.5v5zM574 713h13M574 713l3 -2.5v5z" stroke="#000" stroke-width="1.2" fill="#000"/>
<rect x="594.5" y="703.5" width="11" height="11" fill="#60b060" stroke="#2a6a2a"/><rect x="597" y="705.5" width="6" height="4" fill="#a8e0a0"/>
<path d="M617.5 706.5 l3 -3 h11 v11 l-3 3 h-11z" fill="#60b060" stroke="#2a6a2a"/><path d="M617.5 706.5 h11 v11 M628.5 706.5 l3 -3" stroke="#2a6a2a" fill="none"/>
<g fill="#fff"><rect x="641" y="712" width="7" height="1"/><path d="M641 714h7l-3.5 3z"/></g>
</svg>
<!-- /DRAW -->
<!-- toolbar icons overlay -->
<svg class="a" style="left:0;top:0" width="974" height="100" viewBox="0 0 974 100">
<defs>
<linearGradient id="gdoc" x1="0" y1="0" x2="1" y2="1"><stop offset="0" stop-color="#fff"/><stop offset="1" stop-color="#d8dde6"/></linearGradient>
<linearGradient id="gpaste" x1="0" y1="0" x2="0" y2="1"><stop offset="0" stop-color="#ffe38a"/><stop offset="1" stop-color="#d89c1a"/></linearGradient>
<linearGradient id="gorange" x1="0" y1="0" x2="0" y2="1"><stop offset="0" stop-color="#ffd99a"/><stop offset="1" stop-color="#fea94f"/></linearGradient>
</defs>
<!-- grips -->
<g fill="#27519c"><rect x="14" y="64" width="2" height="2"/><rect x="14" y="68" width="2" height="2"/><rect x="14" y="72" width="2" height="2"/><rect x="14" y="76" width="2" height="2"/>
<rect x="179" y="64" width="2" height="2"/><rect x="179" y="68" width="2" height="2"/><rect x="179" y="72" width="2" height="2"/><rect x="179" y="76" width="2" height="2"/></g>
<g fill="#fff"><rect x="15" y="65" width="1" height="1"/><rect x="15" y="69" width="1" height="1"/><rect x="15" y="73" width="1" height="1"/><rect x="15" y="77" width="1" height="1"/></g>
<!-- new doc -->
<path d="M23.5 65.5h8l3 3v10.5h-11z" fill="url(#gdoc)" stroke="#6d7686"/>
<path d="M31.5 65.5v3h3" fill="#c8ced8" stroke="#6d7686"/>
<!-- separators -->
<g fill="#6a8ccb"><rect x="44" y="65" width="1" height="15"/><rect x="96" y="65" width="1" height="15"/></g>
<g fill="#fff"><rect x="45" y="66" width="1" height="15"/><rect x="97" y="66" width="1" height="15"/></g>
<!-- copy -->
<path d="M50.5 65.5h6l2 2v6.5h-8z" fill="#fff" stroke="#5a7bb8"/>
<path d="M52 67.5h4M52 69.5h4M52 71.5h4" stroke="#4f7fd6"/>
<path d="M56.5 69.5h6l2.5 2.5v6.5h-8.5z" fill="#fff" stroke="#34528f"/>
<path d="M58 72.5h5M58 74.5h5M58 76.5h5" stroke="#2f62c8"/>
<!-- paste -->
<rect x="73.5" y="66.5" width="10" height="11" rx="1" fill="url(#gpaste)" stroke="#8a6a1a"/>
<rect x="76.5" y="65" width="4" height="3" fill="#fff5c0" stroke="#8a6a1a"/>
<path d="M79.5 71.5h7l2 2v5h-9z" fill="#f2f2f2" stroke="#555"/>
<path d="M81 73.5h5M81 75.5h5" stroke="#666"/>
<!-- undo -->
<path d="M107 68.5 C112 66, 117 69, 115 73.5 C114 76, 112 77.5, 110 78" fill="none" stroke="#3a76d6" stroke-width="2.4"/>
<path d="M104 66v6h6z" fill="#3a76d6"/>
<path d="M124 71h6l-3 3z" fill="#000"/>
<!-- chevron marks -->
<g fill="#fff"><path d="M164 63l2 1.5-2 1.5zM167 63l2 1.5-2 1.5z"/><rect x="163" y="76" width="7" height="1"/><path d="M163 78h7l-3.5 3z"/>
<rect x="957" y="76" width="7" height="1"/><path d="M957 78h7l-3.5 3z"/></g>
<g fill="#000"><rect x="163" y="77" width="7" height="1" opacity=".6"/></g>
</svg>
</body></html>
